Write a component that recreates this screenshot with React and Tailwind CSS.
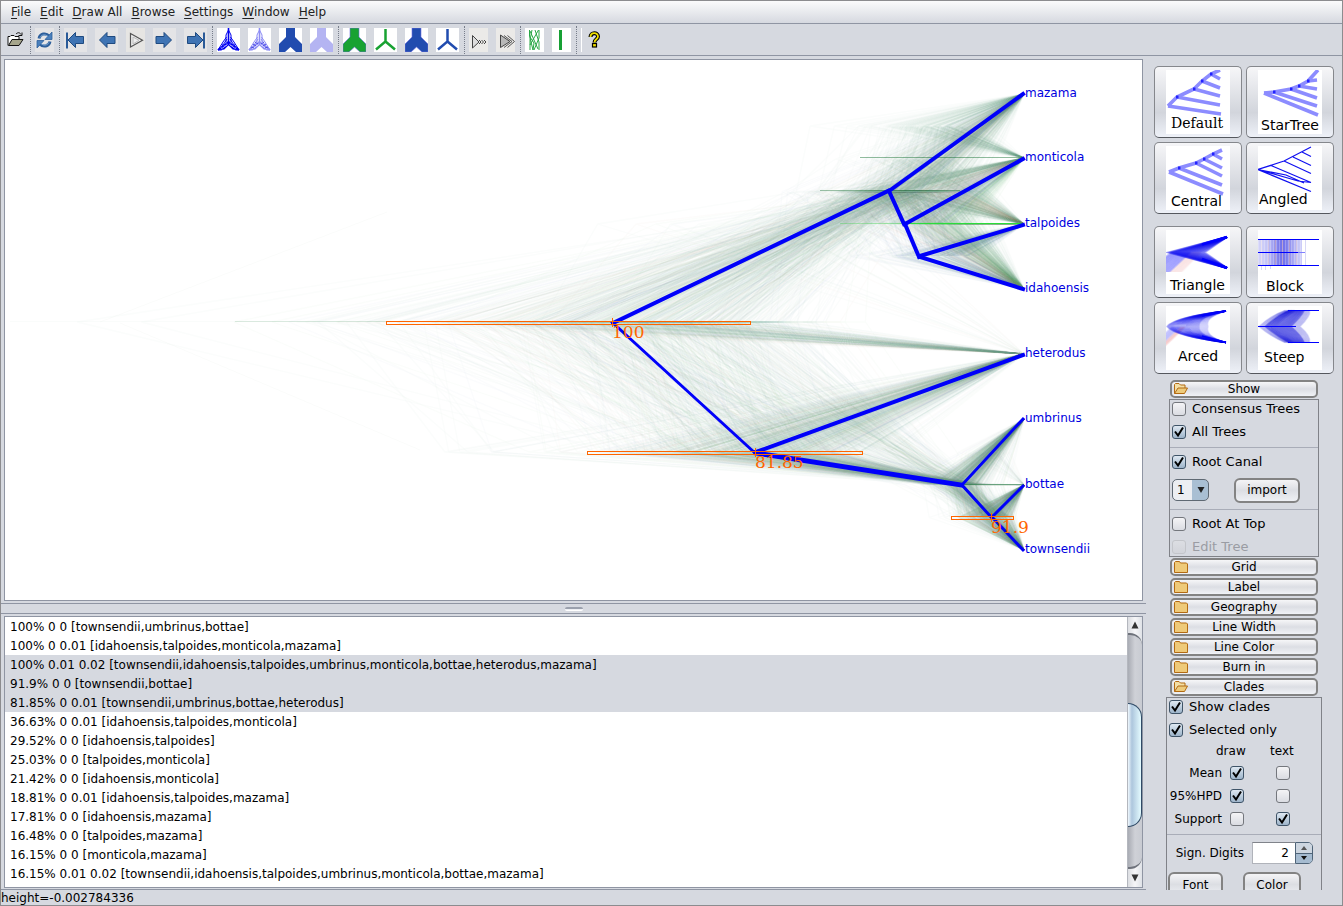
import React from "react";

const LEAF_X = 1024;
const LEAVES = [
  { name: "mazama", y: 94 },
  { name: "monticola", y: 158 },
  { name: "talpoides", y: 224 },
  { name: "idahoensis", y: 289 },
  { name: "heterodus", y: 354 },
  { name: "umbrinus", y: 419 },
  { name: "bottae", y: 485 },
  { name: "townsendii", y: 550 },
];

function makeRandom(seed) {
  let s = seed;
  return () => {
    s = (s + 0x6d2b79f5) | 0;
    let t = Math.imul(s ^ (s >>> 15), 1 | s);
    t = (t + Math.imul(t ^ (t >>> 7), 61 | t)) ^ t;
    return ((t ^ (t >>> 14)) >>> 0) / 4294967296;
  };
}

const leaf = (i) => ({ x: LEAF_X, lo: LEAVES[i].y, hi: LEAVES[i].y, d: "" });

function join(a, b, height) {
  const tallest = Math.max(LEAF_X - a.x, LEAF_X - b.x);
  const x = LEAF_X - Math.max(height, tallest * 1.04 + 2);
  const lo = Math.min(a.lo, b.lo);
  const hi = Math.max(a.hi, b.hi);
  const y = (lo + hi) / 2;
  const branch = (c) => `M${x.toFixed(1)} ${y}L${c.x.toFixed(1)} ${(c.lo + c.hi) / 2}`;
  return { x, lo, hi, d: a.d + b.d + branch(a) + branch(b) };
}

function makeTrees(count) {
  const rnd = makeRandom(20);
  const normal = () => Math.sqrt(-2 * Math.log(rnd() + 1e-9)) * Math.cos(2 * Math.PI * rnd());
  const around = (median, sigma) => median * Math.exp(sigma * normal());
  const trees = [];
  for (let i = 0; i < count; i++) {
    let color = "#1a7640";
    const pick = rnd();
    const top = around(132, 0.22);
    const mid = top * (0.68 + 0.27 * rnd());
    const low = mid * (0.62 + 0.33 * rnd());
    let four;
    const [ma, mo, ta, id] = [0, 1, 2, 3].map(leaf);
    if (pick < 0.18) {
      four = join(ma, join(mo, join(ta, id, low), mid), top);
      color = "#3c66b4";
    } else if (pick < 0.29) {
      four = join(ma, join(id, join(mo, ta, low), mid), top);
      color = "#a84038";
    } else if (pick < 0.41) {
      four = join(ma, join(ta, join(mo, id, low), mid), top);
      color = "#10b020";
    } else if (pick < 0.5) four = join(mo, join(ma, join(ta, id, low), mid), top);
    else if (pick < 0.6) four = join(mo, join(ta, join(ma, id, low), mid), top);
    else if (pick < 0.68) four = join(id, join(ta, join(ma, mo, low), mid), top);
    else if (pick < 0.76) four = join(join(ma, mo, mid), join(ta, id, low), top);
    else if (pick < 0.84) four = join(join(ma, ta, mid), join(mo, id, low), top);
    else if (pick < 0.92) four = join(join(ma, id, mid), join(mo, ta, low), top);
    else four = join(ta, join(id, join(ma, mo, low), mid), top);

    const [he, um, bo, to] = [4, 5, 6, 7].map(leaf);
    const pair = around(33, 0.45);
    const three = around(64, 0.22);
    const p3 = rnd();
    const south =
      p3 < 0.92
        ? join(um, join(bo, to, Math.min(pair, three)), three)
        : p3 < 0.96
          ? join(bo, join(um, to, pair), three)
          : join(to, join(um, bo, pair), three);

    const scale = normal();
    const rootHeight = 405 * Math.exp(0.2 * scale + 0.11 * normal());
    const hetHeight = 262 * Math.exp(0.16 * scale + 0.2 * normal());
    const p7 = rnd();
    let root;
    if (p7 < 0.77) root = join(four, join(he, south, hetHeight), rootHeight);
    else if (p7 < 0.98) root = join(he, join(four, south, rootHeight * (0.7 + 0.25 * rnd())), rootHeight);
    else root = join(join(four, he, hetHeight), south, rootHeight);
    trees.push({ d: root.d, color });
  }
  return trees;
}

const TREES = makeTrees(850);

const CONSENSUS = [
  [613, 323, 889, 191, 4],
  [889, 191, 1024, 94, 4],
  [889, 191, 905, 224, 4],
  [905, 224, 1024, 159, 4],
  [905, 224, 920, 257, 4],
  [920, 256, 1024, 225, 4],
  [920, 257, 1024, 289, 4],
  [613, 323, 756, 453, 3],
  [756, 452, 1024, 355, 4],
  [756, 453, 962, 485, 5],
  [962, 485, 1024, 419, 3],
  [962, 485, 992, 517, 3],
  [992, 517, 1024, 486, 3],
  [992, 517, 1024, 550, 3],
];

const SUPPORTS = [
  { x: 613, y: 323, from: 386, to: 750, label: "100" },
  { x: 756, y: 453, from: 587, to: 862, label: "81.85" },
  { x: 992, y: 518, from: 951, to: 1013, label: "91.9" },
];

function TreeCanvas() {
  return (
    <svg viewBox="5 60 1137 540" preserveAspectRatio="xMinYMin meet" className="block h-full w-full" role="img" aria-label="Tree set">
      <g fill="none" strokeWidth="1.300" strokeOpacity="0.024" opacity="0.6">
        {TREES.map((t, i) => (
          <path key={i} d={t.d} stroke={t.color} />
        ))}
      </g>
      <g stroke="#0a6a28" fill="none">
        <path d="M820 190.500H960" strokeOpacity=".4" />
        <path d="M860 157.500H1024M962 484.500H1024" strokeOpacity=".45" />
        <path d="M840 223.500H904" stroke="#20d030" strokeOpacity=".3" />
        <path d="M904 223.500H1024" stroke="#20e030" strokeOpacity=".85" />
        <path d="M235 321.500H613" strokeOpacity=".15" />
        <path d="M10 321.500H235M100 322L387 212M120 323L420 450" strokeOpacity=".02" />
      </g>
      <g stroke="#0000fa" strokeLinecap="square">
        {CONSENSUS.map(([x1, y1, x2, y2, w], i) => (
          <path key={i} d={`M${x1} ${y1}L${x2 - 1} ${y2}`} strokeWidth={w} />
        ))}
      </g>
      <g fill="#0000e0" fontSize="12" fontFamily="'DejaVu Sans', sans-serif">
        {LEAVES.map((l) => (
          <text key={l.name} x={LEAF_X + 1} y={l.y + 3}>
            {l.name}
          </text>
        ))}
      </g>
      <g stroke="#ff6600" fill="none">
        {SUPPORTS.map((s) => (
          <g key={s.label}>
            <rect x={s.from + 0.5} y={s.y - 1.5} width={s.to - s.from} height="3" />
            <path d={`M${s.x - 0.5} ${s.y - 5}v9`} />
            <text x={s.x - 1} y={s.y + 15} fill="#ff6600" stroke="none" fontSize="17" fontFamily="'DejaVu Serif', serif">
              {s.label}
            </text>
          </g>
        ))}
      </g>
    </svg>
  );
}

/* ---------- toolbar ---------- */

const ARROW = "M12 4.500v4h8v7h-8v4L4.500 12z";

function ArrowIcon({ flip, bar }) {
  return (
    <svg viewBox="0 0 23 24" className="h-6 w-[23px] bg-[#e4e4e6]">
      <g transform={flip ? "translate(23 0) scale(-1 1)" : undefined}>
        <path d={ARROW} fill="#3f74b4" stroke="#1f4a80" transform={bar ? "translate(-.5 0)" : undefined} />
        {bar && <path d="M3 4.500v16" stroke="#2a5a98" strokeWidth="2" />}
      </g>
    </svg>
  );
}

function YIcon({ fill, width, shadow }) {
  const wide = "M7 0H16V9L23 16V24H17L11.500 19L6 24H0V16L7 9Z";
  return (
    <svg viewBox="0 0 23 24" className="h-6 w-[23px] bg-white">
      {width === "wide" ? (
        <path d={wide} fill={fill} stroke={shadow} strokeWidth=".6" />
      ) : (
        <path d="M11.500 1V13.500L2 21.500M11.500 13.500L21 21.500" stroke={fill} strokeWidth="2.500" fill="none" />
      )}
    </svg>
  );
}

function CloudIcon({ color, mesh }) {
  return (
    <svg viewBox="0 0 23 24" className="h-6 w-[23px] bg-white">
      <g stroke={color} fill="none">
        <path d="M11.500 0V14" strokeWidth="1.600" />
        <path d="M11.500 2L9 7V14M11.500 2L14 7V14M9.500 9L6 14L1 22M13.500 9L17 14L22 22M10 11L4 20M13 11L19 20" />
        <path d="M1 22L11.500 14L22 22" strokeWidth="1.800" />
        <path d="M4 22L10 18L12 15M19 22L13 18L11 15M1 22L7 21L12 16M22 22L16 21L11 16" strokeWidth="1.100" />
        <path d="M5 16L8 18M7 14L10 16M3 19L6 20M18 16L15 18M16 14L13 16M20 19L17 20" stroke={mesh} />
      </g>
    </svg>
  );
}

function RefreshIcon() {
  return (
    <svg viewBox="0 0 19 24" className="h-6 w-[19px] bg-[#e4e4e6]">
      <g stroke="#2d5f9c" strokeWidth="3" fill="none">
        <path d="M4 10.500C5 5.500 11 4.500 14 8" />
        <path d="M15 13.500C14 18.500 8 19.500 5 16" />
      </g>
      <path d="M17 4V11.500H10Z" fill="#4a80bd" stroke="#2d5f9c" strokeWidth=".8" />
      <path d="M2 20V12.500H9Z" fill="#4a80bd" stroke="#2d5f9c" strokeWidth=".8" />
      <path d="M5 9.500C6.500 6.500 10.500 6 13 8.500M14 14.500C12.500 17.500 8.500 18 6 15.500" stroke="#8db4dc" strokeWidth=".9" fill="none" />
    </svg>
  );
}

function OpenIcon() {
  return (
    <svg viewBox="0 0 19 24" className="h-6 w-[19px]">
      <path d="M2 17.500V8.500H4L5 7.500H8L9 8.500H13V11.500" fill="#fff" stroke="#111" />
      <path d="M2.500 17.500L6 11.500H17L13 17.500Z" fill="#a5a58c" stroke="#111" />
      <path d="M10 6C12 4 14 4.500 15 6.500M12.500 7.500H16V4.500" fill="none" stroke="#111" />
    </svg>
  );
}

function PlayIcon() {
  return (
    <svg viewBox="0 0 19 24" className="h-6 w-[19px] bg-[#e6e5e3]">
      <path d="M4.500 5.500V19L16.500 12.200Z" fill="#eee" stroke="#555" strokeWidth="1.200" />
      <path d="M7 9V16L13 12.300Z" fill="none" stroke="#bbb" />
    </svg>
  );
}

function StepIcon() {
  return (
    <svg viewBox="0 0 19 24" className="h-6 w-[19px] bg-[#ebeae8]">
      <path d="M3.500 7.500V20L10 14Z" fill="#ddd" stroke="#444" />
      <path d="M10 12l2 2-2 2M12.500 12l2 2-2 2M15 12l2 2-2 2" stroke="#444" fill="none" />
    </svg>
  );
}

function FastIcon() {
  return (
    <svg viewBox="0 0 19 24" className="h-6 w-[19px] bg-[#ebeae8]">
      <path d="M4.500 7V19.500L14 13.500Z" fill="#b8b8b8" stroke="#444" />
      <path d="M8 7.500L16 13.500L8 19.500M11.500 7.500L18.500 13.500L11.500 19.500" fill="none" stroke="#555" />
    </svg>
  );
}

function LinesIcon() {
  return (
    <svg viewBox="0 0 19 24" className="h-6 w-[19px] bg-white">
      <g stroke="#28a745" fill="none">
        <path d="M4.500 2V8L8 22M7 2L5 12V22M5 3L13 21M13.500 2L5 17M10 2L14 14V22M14 2V10L9 22M5 9L9 15L8 22" />
      </g>
    </svg>
  );
}

function BarIcon() {
  return (
    <svg viewBox="0 0 19 24" className="h-6 w-[19px] bg-white">
      <path d="M8.500 2V22" stroke="#16a034" strokeWidth="3" />
    </svg>
  );
}

function HelpIcon() {
  return (
    <svg viewBox="0 0 19 24" className="h-6 w-[19px]">
      <path d="M4.500 9C4.500 4 12 4 12 8.500C12 11.500 8.500 11 8.500 14.500" fill="none" stroke="#000" strokeWidth="4" />
      <path d="M4.500 9C4.500 4 12 4 12 8.500C12 11.500 8.500 11 8.500 14.500" fill="none" stroke="#f0e000" strokeWidth="1.800" />
      <rect x="6.500" y="15.500" width="4" height="3.500" fill="#f0e000" stroke="#000" strokeWidth="1.200" />
    </svg>
  );
}

const BLUE = "#214caf";
const GREEN = "#18a232";

const TOOLBAR = [
  [["Open", <OpenIcon />]],
  [["Reload", <RefreshIcon />]],
  [
    ["First tree", <ArrowIcon bar />],
    ["Previous tree", <ArrowIcon />],
    ["Play", <PlayIcon />],
    ["Next tree", <ArrowIcon flip />],
    ["Last tree", <ArrowIcon flip bar />],
  ],
  [
    ["All trees", <CloudIcon color="#0000f0" mesh="#4040ff" />],
    ["All trees, light", <CloudIcon color="#8c8cf4" mesh="#4848e8" />],
    ["Thick consensus", <YIcon fill={BLUE} width="wide" />],
    ["Thick consensus, light", <YIcon fill="#b4b4f2" width="wide" />],
  ],
  [
    ["Thick green", <YIcon fill={GREEN} width="wide" shadow="#7070e0" />],
    ["Thin green", <YIcon fill={GREEN} />],
    ["Thick blue", <YIcon fill={BLUE} width="wide" shadow="#7070e0" />],
    ["Thin blue", <YIcon fill={BLUE} />],
  ],
  [
    ["Step", <StepIcon />],
    ["Fast forward", <FastIcon />],
  ],
  [
    ["Many lines", <LinesIcon />],
    ["Single line", <BarIcon />],
  ],
];

function ToolButton({ label, children }) {
  return (
    <button type="button" aria-label={label} className="px-1">
      {children}
    </button>
  );
}

function Toolbar() {
  return (
    <div role="toolbar" className="flex h-8 items-center border-b border-[#8f95a3] bg-[#d6d9e0] pt-px pl-px">
      {TOOLBAR.map((group, i) => (
        <div key={i} className="flex items-center">
          {group.map(([label, icon]) => (
            <ToolButton key={label} label={label}>
              {icon}
            </ToolButton>
          ))}
          <span className="h-7 w-0.5 border-r border-dotted border-[#777d8a]" />
        </div>
      ))}
      <span className="ml-1 h-6 w-px bg-white" />
      <ToolButton label="Help">
        <HelpIcon />
      </ToolButton>
    </div>
  );
}

/* ---------- layout thumbnails ---------- */

function Caption({ x, y, serif, children }) {
  return (
    <text x={x} y={y} fontSize="14" fill="#000" fontFamily={serif ? "'DejaVu Serif', serif" : "'DejaVu Sans', sans-serif"}>
      {children}
    </text>
  );
}

function Ladder({ spine, tips }) {
  return (
    <g>
      <g stroke="#8c8cff" strokeWidth="3.600" fill="none">
        <path d={"M" + spine.map((p) => p.join(" ")).join("L")} />
        {tips.map((t, i) => (
          <path key={i} d={`M${spine[i].join(" ")}L${t.join(" ")}`} />
        ))}
      </g>
      {spine.slice(1, -1).map(([x, y], i) => (
        <rect key={i} x={x - 1} y={y - 1.5} width="2.500" height="3" fill="#2222ff" />
      ))}
    </g>
  );
}

const range = (n) => Array.from({ length: n }, (_, i) => i);

const THUMBS = {
  Default: (
    <>
      <Ladder
        spine={[[2, 36], [11, 27], [28, 19], [36, 11], [45, 4], [54, 0]]}
        tips={[[55, 44], [54, 35], [54, 26], [54, 18], [54, 9]]}
      />
      <Caption x={5} y={58} serif>Default</Caption>
    </>
  ),
  StarTree: (
    <>
      <Ladder
        spine={[[6, 23], [16, 22], [33, 19], [41, 16], [50, 11], [60, 0]]}
        tips={[[60, 45], [59, 36], [59, 28], [59, 19], [59, 10]]}
      />
      <Caption x={3} y={60}>StarTree</Caption>
    </>
  ),
  Central: (
    <>
      <Ladder
        spine={[[3, 26], [13, 22], [30, 17], [38, 13], [47, 8], [56, 4]]}
        tips={[[57, 48], [56, 39], [56, 30], [56, 22], [56, 13]]}
      />
      <Caption x={5} y={60}>Central</Caption>
    </>
  ),
  Angled: (
    <>
      <path
        d="M0 23.500L26 15L53 1M44 6L53 10.500M35 11L53 19.500M26 15L53 27.500M0 23.500L53 45.500M13 19.500L53 36.500M0 23.500L40 35L53 36.500M0 23.500L28 29L46 37M0 23.500L13 19.500"
        stroke="#1010f0"
        strokeWidth="1.200"
        fill="none"
      />
      <Caption x={1} y={58}>Angled</Caption>
    </>
  ),
  Triangle: (
    <>
      <g fill="none">
        {range(30).map((i) => (
          <path
            key={"s" + i}
            d={`M${6 + i} 22L${i - 26} ${46 + i * 0.3}`}
            stroke={i > 19 ? "#e05050" : "#2020ff"}
            strokeOpacity={i > 19 ? 0.06 : 0.18}
            strokeWidth="2"
          />
        ))}
        {range(38).map((i) => (
          <path key={i} d={`M61 7L${2 + i} 22.500L61 38`} stroke="#0808f0" strokeOpacity=".2" strokeWidth="2" />
        ))}
        <path d="M61 7L36 14.500M61 38L36 29" stroke="#0000ff" strokeWidth="2.500" />
      </g>
      <rect x="0" y="42" width="64" height="22" fill="#fff" />
      <Caption x={4} y={60}>Triangle</Caption>
    </>
  ),
  Block: (
    <>
      {range(44).map((i) => (
        <rect
          key={i}
          x={i}
          y="10"
          width="1"
          height="25"
          fill={i % 7 === 3 ? "#7040a0" : "#2828e0"}
          fillOpacity={(0.2 + 0.45 * Math.exp(-(((i - 24) / 12) ** 2))) * (i % 3 ? 1 : 0.75)}
        />
      ))}
      <path d="M3.500 36v4M7.500 36v4M12.500 36v3M47.500 10v25" stroke="#8080e0" strokeOpacity=".3" />
      <path d="M0 9.500H61M0 22.500H40M0 35.500H61" stroke="#0000ff" />
      <path d="M40 22.500H47" stroke="#8080ff" />
      <Caption x={8} y={61}>Block</Caption>
    </>
  ),
  Arced: (
    <>
      <g fill="none">
        {range(14).map((i) => (
          <path
            key={"s" + i}
            d={`M${6 + i} 21L${i - 16} 42`}
            stroke={i > 8 ? "#e05050" : "#2020ff"}
            strokeOpacity=".1"
            strokeWidth="2"
          />
        ))}
        {range(42).map((i) => (
          <path
            key={i}
            d={`M60 5Q${8 + i * 0.75} 11 ${1 + i} 20.500Q${8 + i * 0.75} 30 60 36.500`}
            stroke="#0808f0"
            strokeOpacity={i > 32 ? 0.12 : 0.24}
            strokeWidth="1.500"
          />
        ))}
        <path d="M60 5L36 10M60 36.500L36 30" stroke="#0000ff" strokeWidth="1.600" />
      </g>
      <Caption x={12} y={55}>Arced</Caption>
    </>
  ),
  Steep: (
    <>
      <g fill="none">
        {range(42).map((i) => (
          <path
            key={i}
            d={`M${27 + i * 0.6} 4.500Q${12 + i} 10 ${1 + i} 20.500Q${12 + i} 30 ${27 + i * 0.6} 36.500`}
            stroke="#1010d8"
            strokeWidth="1.500"
            strokeOpacity={i > 32 || i < 6 ? 0.14 : 0.38}
          />
        ))}
        <path d="M30 4.500H61M30 36.500H61M0 20.500H38" stroke="#0000ff" />
      </g>
      <Caption x={6} y={56}>Steep</Caption>
    </>
  ),
};

function ThumbButton({ name }) {
  return (
    <button
      type="button"
      className="flex h-[72px] w-[88px] items-center justify-center rounded-[5px] border border-[#85878c] border-b-[#55585e] bg-linear-to-b from-[#f6f6f8] via-[#d2d5dc] via-65% to-[#eef1f8]"
    >
      <svg viewBox="0 0 64 64" className="h-16 w-16 overflow-hidden bg-white">
        {THUMBS[name]}
      </svg>
    </button>
  );
}

/* ---------- form controls ---------- */

function CheckBox({ label, hidden, checked, disabled }) {
  return (
    <label className={`flex h-[18px] items-center gap-1.5 text-[13px] ${disabled ? "text-[#9a9ca3]" : "text-black"}`}>
      <span className="relative h-3.5 w-3.5 shrink-0">
        <input
          type="checkbox"
          defaultChecked={checked}
          disabled={disabled}
          aria-label={hidden}
          className="peer block h-3.5 w-3.5 appearance-none rounded-[3px] border border-[#74777d] bg-linear-to-b from-[#f4f4f6] to-[#dadce2] checked:border-[#3f5468] checked:from-[#dfe9f2] checked:to-[#9db4ca] disabled:border-[#c3c5ca] disabled:from-[#dcdee3] disabled:to-[#d2d4da]"
        />
        <svg viewBox="0 0 14 14" className="pointer-events-none absolute inset-0 hidden peer-checked:block">
          <path d="M3 6.500L6 10.500L11 2.500" stroke="#000" strokeWidth="2" fill="none" />
        </svg>
      </span>
      {label}
    </label>
  );
}

function FolderIcon({ open }) {
  return (
    <svg viewBox="0 0 16 14" className="h-3.5 w-4">
      {open ? (
        <>
          <path d="M2.500 11.500V2.500L3.500 1.500H7L8.500 3H13V6" fill="#f3dfa5" stroke="#b26a12" />
          <path d="M2.500 11.500L6 6H15.500L12.500 11.500Z" fill="#edcb7c" stroke="#b26a12" />
        </>
      ) : (
        <path d="M2.500 12.500V2.500L3.500 1.500H7.500L8.500 3H14.500L15.500 4V12.500Z" fill="#efca78" stroke="#b26a12" />
      )}
    </svg>
  );
}

function SectionHeader({ title, open }) {
  return (
    <button
      type="button"
      aria-expanded={!!open}
      className="my-px grid h-[18px] w-[148px] grid-cols-[16px_1fr_16px] items-center rounded-[5px] border-2 border-[#838383] bg-linear-to-b from-[#f6f6f8] via-[#dcdee4] to-[#f0f2f6] text-center leading-none"
    >
      <FolderIcon open={open} />
      <span>{title}</span>
    </button>
  );
}

function PushButton({ className = "", children }) {
  return (
    <button
      type="button"
      className={`h-[25px] rounded-[6px] border-2 border-[#838383] bg-linear-to-b from-[#f4f4f6] via-[#dcdee3] to-[#eef0f4] leading-none ${className}`}
    >
      {children}
    </button>
  );
}

const Rule = () => <hr className="mt-1.5 mb-[5px] border-[#a9adb8]" />;

function ShowPanel() {
  return (
    <div className="w-[150px] border border-[#808288]">
      <div className="flex flex-col gap-[5px] pl-0.5">
        <CheckBox label="Consensus Trees" />
        <CheckBox label="All Trees" checked />
      </div>
      <Rule />
      <div className="pl-0.5">
        <CheckBox label="Root Canal" checked />
        <div className="mt-1.5 flex h-[26px] items-center">
          <span className="relative block h-[22px] w-[37px]">
            <select
              aria-label="Root canal tree"
              className="block h-full w-full appearance-none rounded-[5px] border border-[#5f6973] bg-linear-to-r from-[#eceef2] from-55% to-[#a9bfd3] to-55% pl-1"
            >
              <option>1</option>
              <option>2</option>
            </select>
            <svg viewBox="0 0 8 7" className="pointer-events-none absolute top-2 right-1 h-[7px] w-2">
              <path d="M0.500 0H7.500L4 6Z" fill="#222" />
            </svg>
          </span>
          <PushButton className="ml-[25px] w-[66px]">import</PushButton>
        </div>
      </div>
      <Rule />
      <div className="flex flex-col gap-[5px] pl-0.5">
        <CheckBox label="Root At Top" />
        <CheckBox label="Edit Tree" disabled />
      </div>
    </div>
  );
}

const CLADE_ROWS = [
  ["Mean", true, false],
  ["95%HPD", true, false],
  ["Support", false, true],
];

function CladesPanel() {
  return (
    <div className="w-[156px] shrink-0 border border-[#808288]">
      <div className="flex flex-col gap-[5px] pl-0.5">
        <CheckBox label="Show clades" checked />
        <CheckBox label="Selected only" checked />
      </div>
      <table className="mt-0.5 w-full table-fixed border-collapse leading-none">
        <thead>
          <tr className="h-5">
            <th className="w-[55px]" />
            <th className="w-[46px] pl-1 text-left font-normal">
              <span className="-ml-2.5">draw</span>
            </th>
            <th className="pl-0.5 text-left font-normal">text</th>
          </tr>
        </thead>
        <tbody>
          {CLADE_ROWS.map(([name, draw, text]) => (
            <tr key={name} className="h-[23px]">
              <th className="text-right font-normal">{name}</th>
              <td className="pl-2">
                <CheckBox hidden={`${name} draw`} checked={draw} />
              </td>
              <td className="pl-2">
                <CheckBox hidden={`${name} text`} checked={text} />
              </td>
            </tr>
          ))}
        </tbody>
      </table>
      <hr className="mt-1 border-[#a9adb8]" />
      <div className="mt-[7px] flex h-[22px] items-center justify-end pr-2">
        <label htmlFor="digits" className="pr-2">
          Sign. Digits
        </label>
        <input
          id="digits"
          defaultValue="2"
          className="h-[22px] w-[43px] border border-r-0 border-[#b0b3ba] border-t-[#80838a] bg-white pr-1.5 text-right"
        />
        <span className="flex h-[22px] w-[18px] flex-col overflow-hidden rounded-r-[5px] border border-[#4f6478]">
          <button type="button" aria-label="More digits" className="flex flex-1 items-center justify-center border-b border-[#4f6478] bg-[#cdd6e0]">
            <svg viewBox="0 0 6 4" className="h-1 w-1.5">
              <path d="M0 4H6L3 0Z" fill="#555" />
            </svg>
          </button>
          <button type="button" aria-label="Fewer digits" className="flex flex-1 items-center justify-center bg-[#a5bbd0]">
            <svg viewBox="0 0 6 4" className="h-1 w-1.5">
              <path d="M0 0H6L3 4Z" fill="#111" />
            </svg>
          </button>
        </span>
      </div>
      <div className="mt-2 flex gap-5 pl-px">
        <PushButton className="w-[55px] border-[#7d8fa3]">Font</PushButton>
        <PushButton className="w-[58px]">Color</PushButton>
      </div>
    </div>
  );
}

function SidePanel() {
  return (
    <aside className="flex w-[196px] shrink-0 flex-col items-center overflow-hidden pt-2.5">
      <div className="grid shrink-0 grid-cols-2 gap-1">
        {["Default", "StarTree", "Central", "Angled"].map((n) => (
          <ThumbButton key={n} name={n} />
        ))}
      </div>
      <div className="mt-3 mb-[5px] grid shrink-0 grid-cols-2 gap-1">
        {["Triangle", "Block", "Arced", "Steep"].map((n) => (
          <ThumbButton key={n} name={n} />
        ))}
      </div>
      <SectionHeader title="Show" open />
      <ShowPanel />
      {["Grid", "Label", "Geography", "Line Width", "Line Color", "Burn in"].map((t) => (
        <SectionHeader key={t} title={t} />
      ))}
      <SectionHeader title="Clades" open />
      <CladesPanel />
    </aside>
  );
}

/* ---------- clade list ---------- */

const CLADES = [
  "100% 0 0 [townsendii,umbrinus,bottae]",
  "100% 0 0.01 [idahoensis,talpoides,monticola,mazama]",
  "100% 0.01 0.02 [townsendii,idahoensis,talpoides,umbrinus,monticola,bottae,heterodus,mazama]",
  "91.9% 0 0 [townsendii,bottae]",
  "81.85% 0 0.01 [townsendii,umbrinus,bottae,heterodus]",
  "36.63% 0 0.01 [idahoensis,talpoides,monticola]",
  "29.52% 0 0 [idahoensis,talpoides]",
  "25.03% 0 0 [talpoides,monticola]",
  "21.42% 0 0 [idahoensis,monticola]",
  "18.81% 0 0.01 [idahoensis,talpoides,mazama]",
  "17.81% 0 0 [idahoensis,mazama]",
  "16.48% 0 0 [talpoides,mazama]",
  "16.15% 0 0 [monticola,mazama]",
  "16.15% 0.01 0.02 [townsendii,idahoensis,talpoides,umbrinus,monticola,bottae,mazama]",
];
const SELECTED = [2, 3, 4];

function ScrollBar() {
  return (
    <div className="flex w-[15px] shrink-0 flex-col border-l border-[#b4b7be] bg-linear-to-r from-[#dcdee2] via-[#f6f6f8] to-[#dfe2e7]">
      <button type="button" aria-label="Scroll up" className="flex h-4 items-center justify-center">
        <svg viewBox="0 0 8 8" className="h-2 w-2">
          <path d="M0.500 7.500H7.500L4 0.500Z" fill="#333" />
        </svg>
      </button>
      <div className="flex-1 rounded-r-xl border-y-2 border-[#6f737c] bg-linear-to-r from-[#a9acb4] via-[#cfd1d7] to-[#c8cbd2] pt-[68px]">
        <div className="h-[124px] rounded-r-[14px] border border-l-0 border-[#2f4a66] bg-linear-to-r from-[#f0f8fd] via-[#adc6dd] via-30% to-[#e4fbff]" />
      </div>
      <button type="button" aria-label="Scroll down" className="flex h-[18px] items-center justify-center">
        <svg viewBox="0 0 8 8" className="h-2 w-2">
          <path d="M0.500 0.500H7.500L4 7.500Z" fill="#333" />
        </svg>
      </button>
    </div>
  );
}

function CladeList() {
  return (
    <div className="flex h-[272px] shrink-0 border border-[#8f95a3] bg-white">
      <ul className="min-w-0 flex-1 overflow-hidden">
        {CLADES.map((c, i) => (
          <li key={c} className={`h-[19px] truncate pl-[5px] leading-5 ${SELECTED.includes(i) ? "bg-[#d6d9e0]" : ""}`}>
            {c}
          </li>
        ))}
      </ul>
      <ScrollBar />
    </div>
  );
}

const MENUS = ["File", "Edit", "Draw All", "Browse", "Settings", "Window", "Help"];

export default function App() {
  return (
    <div className="flex h-screen w-full flex-col overflow-hidden border border-[#8c8c8f] bg-[#d6d9e0] font-['DejaVu_Sans',sans-serif] text-[12px] leading-4 text-black">
      <nav className="flex h-[23px] shrink-0 items-center gap-px border-b border-[#8f95a3] bg-linear-to-b from-[#fbfbfc] to-[#d6d9e0] pl-1.5">
        {MENUS.map((m) => (
          <button key={m} type="button" className="px-1 text-[#222]">
            <span className="underline underline-offset-2">{m[0]}</span>
            {m.slice(1)}
          </button>
        ))}
      </nav>
      <Toolbar />
      <div className="flex min-h-0 flex-1">
        <main className="flex min-w-0 flex-1 flex-col">
          <div className="mx-[3px] mt-[3px] min-h-0 flex-1 border border-[#8f95a3] bg-white">
            <TreeCanvas />
          </div>
          <div className="my-0.5 flex h-[11px] shrink-0 items-center justify-center border-y border-[#8f95a3]">
            <span className="h-1 w-[18px] rounded border-t-2 border-b border-t-[#9aa0ad] border-b-white bg-[#eceef2]" />
          </div>
          <div className="mx-[3px]">
            <CladeList />
          </div>
          <div className="mt-px border-b border-[#8f95a3]" />
        </main>
        <SidePanel />
      </div>
      <footer className="h-[15px] shrink-0">height=-0.002784336</footer>
    </div>
  );
}
